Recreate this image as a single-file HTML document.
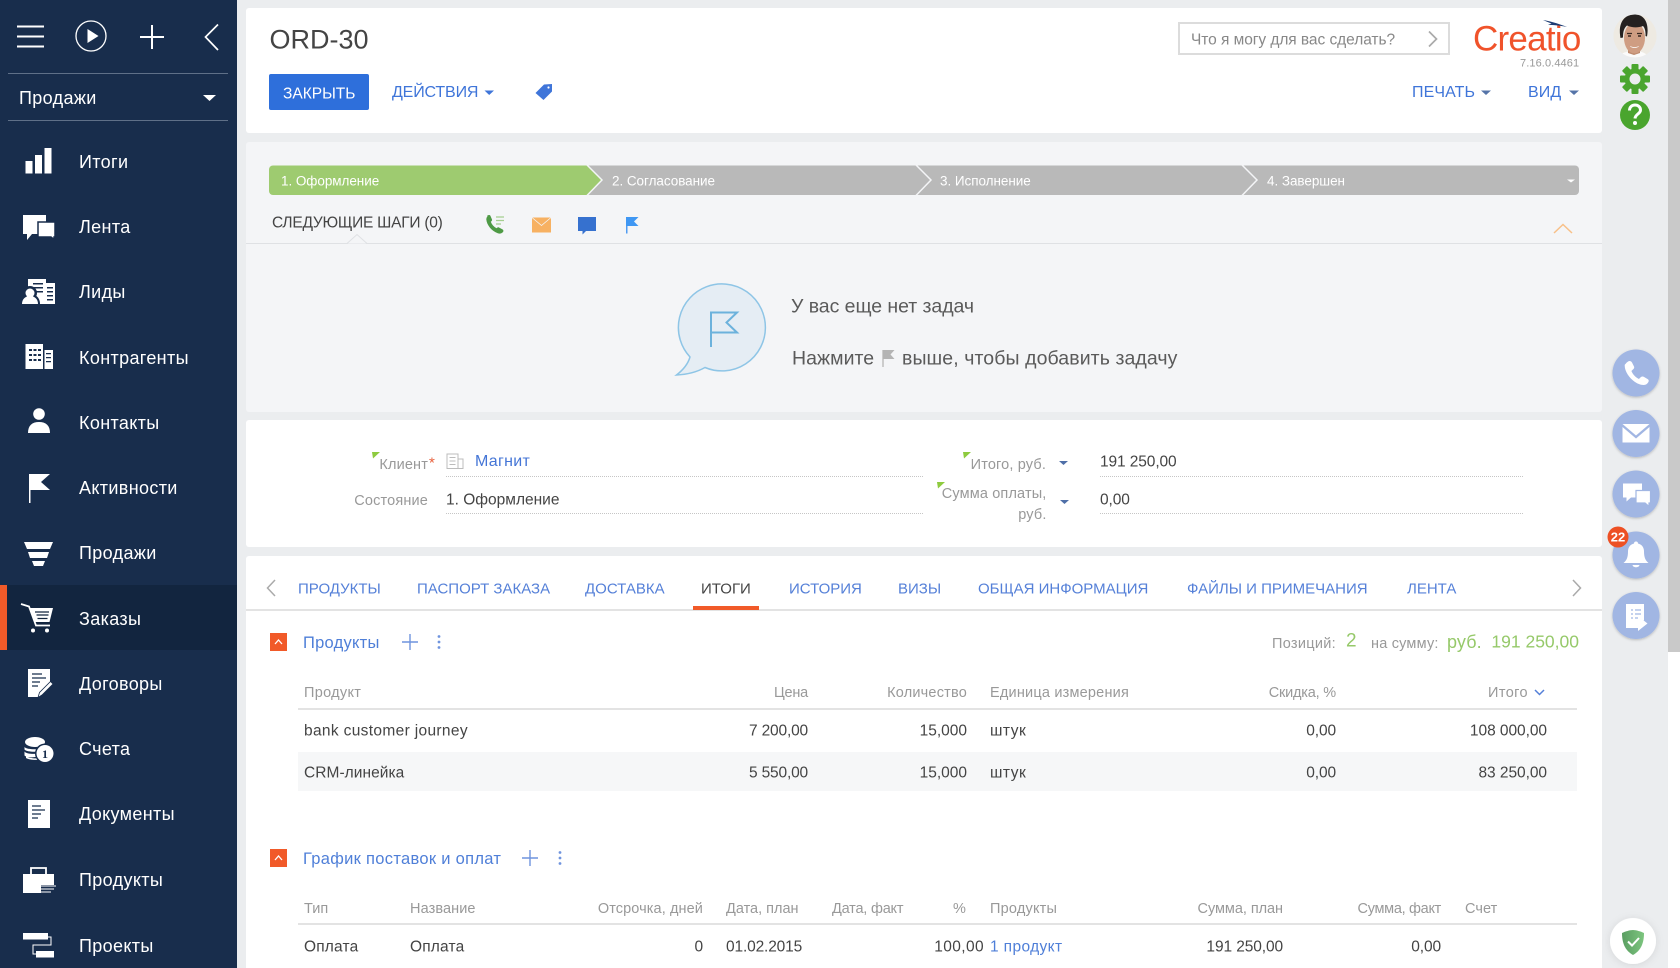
<!DOCTYPE html>
<html lang="ru">
<head>
<meta charset="utf-8">
<title>ORD-30</title>
<style>
html,body{margin:0;padding:0;width:1680px;height:968px;overflow:hidden;background:#ebedef;font-family:"Liberation Sans","DejaVu Sans",sans-serif}
.a{position:absolute}
.t{position:absolute;white-space:nowrap;line-height:1;transform:translateY(-50%);color:#444;font-size:15.5px;letter-spacing:.3px}
.r{transform:translate(-100%,-50%)}
.n{letter-spacing:-.1px}
.m{color:#fff;font-size:18px;left:79px;letter-spacing:.35px}
.l{color:#999;font-size:14.5px;letter-spacing:.15px}
.b{color:#4f7fd8}
.h{color:#999;font-size:14.5px;letter-spacing:.05px}
.tab{color:#5580d8;font-size:15px;top:589px;letter-spacing:0}
.act{font-size:16px;color:#3f75d9;letter-spacing:.1px;top:93px}
.st{top:181px;color:#fff;font-size:13.500px;letter-spacing:-.05px}
svg{position:absolute;left:0;top:0;overflow:visible}
</style>
</head>
<body>
<!-- sidebar -->
<div class="a" style="left:0;top:0;width:237px;height:968px;background:#182d4c"></div>
<div class="a" style="left:0;top:585px;width:237px;height:65px;background:#12253f"></div>
<div class="a" style="left:0;top:585px;width:7px;height:65px;background:#f15a29"></div>
<div class="a" style="left:8px;top:73px;width:220px;height:1px;background:#5f7088"></div>
<div class="a" style="left:8px;top:120px;width:220px;height:1px;background:#5f7088"></div>

<!-- cards -->
<div class="a" style="left:246px;top:8px;width:1356px;height:125px;background:#fff;border-radius:3px"></div>
<div class="a" style="left:246px;top:142px;width:1356px;height:270px;background:#f4f5f7;border-radius:3px"></div>
<div class="a" style="left:246px;top:420px;width:1356px;height:127px;background:#fff;border-radius:3px"></div>
<div class="a" style="left:246px;top:556px;width:1356px;height:412px;background:#fff;border-radius:3px 3px 0 0"></div>
<div class="a" style="left:246px;top:242.500px;width:1356px;height:1.500px;background:#dfe1e4"></div>
<div class="a" style="left:246px;top:609px;width:1356px;height:1.500px;background:#e3e3e3"></div>
<div class="a" style="left:1668px;top:0;width:12px;height:652px;background:#c9c9c9"></div>
<div class="a" style="left:1668px;top:652px;width:12px;height:316px;background:#fff"></div>

<div class="a" style="left:298px;top:752px;width:1279px;height:39px;background:#f6f7f8"></div>
<div class="a" style="left:298px;top:708px;width:1279px;height:1.500px;background:#e3e3e3"></div>
<div class="a" style="left:298px;top:923px;width:1279px;height:1.500px;background:#e3e3e3"></div>

<!-- sidebar text -->
<div class="t" style="left:19px;top:98px;color:#fff;font-size:18px;letter-spacing:.35px">Продажи</div>
<div class="t m" style="top:162px">Итоги</div>
<div class="t m" style="top:227px">Лента</div>
<div class="t m" style="top:292px">Лиды</div>
<div class="t m" style="top:358px">Контрагенты</div>
<div class="t m" style="top:423px">Контакты</div>
<div class="t m" style="top:488px">Активности</div>
<div class="t m" style="top:553px">Продажи</div>
<div class="t m" style="top:619px">Заказы</div>
<div class="t m" style="top:684px">Договоры</div>
<div class="t m" style="top:749px">Счета</div>
<div class="t m" style="top:814px">Документы</div>
<div class="t m" style="top:880px">Продукты</div>
<div class="t m" style="top:946px">Проекты</div>

<!-- header -->
<div class="t" style="left:269.500px;top:39.500px;font-size:27px;color:#444;letter-spacing:0">ORD-30</div>
<div class="a" style="left:269px;top:74px;width:100px;height:36px;background:#2e6fdb;border-radius:2px"></div>
<div class="t" style="left:283px;top:93.500px;color:#fff;font-size:15.500px;letter-spacing:0">ЗАКРЫТЬ</div>
<div class="t act" style="left:392px;letter-spacing:-.15px">ДЕЙСТВИЯ</div>
<div class="a" style="left:1178px;top:22px;width:268px;height:29px;border:2px solid #dcdcdc"></div>
<div class="t" style="left:1191px;top:40px;font-size:15.500px;color:#888;letter-spacing:-.05px">Что я могу для вас сделать?</div>
<div class="t" style="left:1473px;top:39px;font-size:35px;color:#f0532b;letter-spacing:-.75px">Creatio</div>
<div class="t" style="left:1520px;top:64px;font-size:11px;color:#999;letter-spacing:.1px">7.16.0.4461</div>
<div class="t act" style="left:1412px">ПЕЧАТЬ</div>
<div class="t act" style="left:1528px">ВИД</div>

<!-- stages -->
<svg width="1680" height="968" viewBox="0 0 1680 968" style="z-index:0">
<path d="M273 165.500H1575a4 4 0 0 1 4 4V191a4 4 0 0 1-4 4H273z" fill="#b9b9b9"/>
<path d="M273 165.500H587L602 180 587 195H273a4 4 0 0 1-4-4V169.500a4 4 0 0 1 4-4z" fill="#9ecb70"/>
<path d="M587 165L602 180 587 195.500" fill="none" stroke="#f4f5f7" stroke-width="1.500"/>
<path d="M916 165L931 180 916 195.500M1242 165L1257 180 1242 195.500" fill="none" stroke="#f4f5f7" stroke-width="1.500"/>
<path d="M1567 179.500h8l-4 3z" fill="#fff"/>
<path d="M347 243.500l10-9 10 9" fill="#f4f5f7" stroke="#dfe1e4" stroke-width="1"/>
<path d="M1554 233l9-8.500 9 8.500" fill="none" stroke="#f8c088" stroke-width="1.500"/>
</svg>
<div class="t st" style="left:281px">1. Оформление</div>
<div class="t st" style="left:612px">2. Согласование</div>
<div class="t st" style="left:940px">3. Исполнение</div>
<div class="t st" style="left:1267px">4. Завершен</div>
<div class="t" style="left:272px;top:222.500px;font-size:15.500px;color:#444;letter-spacing:-.25px">СЛЕДУЮЩИЕ ШАГИ (0)</div>

<div class="t" style="left:791px;top:307px;font-size:19.500px;color:#5a5a5a;letter-spacing:-.05px">У вас еще нет задач</div>
<div class="t" style="left:792px;top:359px;font-size:19.500px;color:#5a5a5a;letter-spacing:.05px">Нажмите</div>
<div class="t" style="left:902px;top:359px;font-size:19.500px;color:#5a5a5a;letter-spacing:.09px">выше, чтобы добавить задачу</div>

<!-- form -->
<div class="t l r" style="left:428px;top:464.500px">Клиент</div>
<div class="t" style="left:429px;top:463px;color:#e8603c;font-size:15px">*</div>
<div class="t b" style="left:475px;top:462px;font-size:16px;color:#4475d6;letter-spacing:.3px">Магнит</div>
<div class="t l r" style="left:428px;top:500.500px">Состояние</div>
<div class="t" style="left:446px;top:499.500px;font-size:15.500px;color:#444;letter-spacing:0">1. Оформление</div>
<div class="a" style="left:446px;top:476px;width:477px;border-top:1px dotted #c6c6c6"></div>
<div class="a" style="left:446px;top:513px;width:477px;border-top:1px dotted #c6c6c6"></div>
<div class="t l r" style="left:1046px;top:464.500px">Итого, руб.</div>
<div class="t l r" style="left:1046.500px;top:493.500px">Сумма оплаты,</div>
<div class="t l r" style="left:1046.500px;top:514.500px">руб.</div>
<div class="t n" style="left:1100px;top:461.500px">191 250,00</div>
<div class="t n" style="left:1100px;top:499.500px">0,00</div>
<div class="a" style="left:1100px;top:476px;width:423px;border-top:1px dotted #c6c6c6"></div>
<div class="a" style="left:1100px;top:513px;width:423px;border-top:1px dotted #c6c6c6"></div>

<!-- tabs -->
<div class="t tab" style="left:298px">ПРОДУКТЫ</div>
<div class="t tab" style="left:417px">ПАСПОРТ ЗАКАЗА</div>
<div class="t tab" style="left:585px">ДОСТАВКА</div>
<div class="t tab" style="left:701px;color:#444">ИТОГИ</div>
<div class="t tab" style="left:789px">ИСТОРИЯ</div>
<div class="t tab" style="left:898px">ВИЗЫ</div>
<div class="t tab" style="left:978px">ОБЩАЯ ИНФОРМАЦИЯ</div>
<div class="t tab" style="left:1187px">ФАЙЛЫ И ПРИМЕЧАНИЯ</div>
<div class="t tab" style="left:1407px">ЛЕНТА</div>
<div class="a" style="left:693px;top:606px;width:66px;height:4px;background:#f15a29"></div>

<!-- section 1 -->
<div class="t b" style="left:303px;top:643px;font-size:16.500px;color:#4f7fd8;letter-spacing:.25px">Продукты</div>
<div class="t l" style="left:1272px;top:644px;font-size:14.500px;letter-spacing:.3px">Позиций:</div>
<div class="t" style="left:1346px;top:641px;font-size:19px;color:#96c96a">2</div>
<div class="t l" style="left:1371px;top:644px;font-size:14.500px;letter-spacing:.2px">на сумму:</div>
<div class="t" style="left:1447px;top:641.500px;font-size:18px;color:#96c96a;letter-spacing:.1px">руб.</div>
<div class="t r" style="left:1579px;top:641.500px;font-size:17.500px;color:#96c96a;letter-spacing:0">191 250,00</div>

<div class="t h" style="left:304px;top:692.500px;letter-spacing:.3px">Продукт</div>
<div class="t h r" style="left:808px;top:692.500px;letter-spacing:-.2px">Цена</div>
<div class="t h r" style="left:967px;top:692.500px;letter-spacing:.2px">Количество</div>
<div class="t h" style="left:990px;top:692.500px;letter-spacing:.2px">Единица измерения</div>
<div class="t h r" style="left:1336px;top:692.500px;letter-spacing:-.2px">Скидка, %</div>
<div class="t h r" style="left:1528px;top:692.500px;letter-spacing:.4px">Итого</div>

<div class="t" style="left:304px;top:731px;letter-spacing:.34px">bank customer journey</div>
<div class="t r" style="left:808px;top:731px;letter-spacing:-.17px">7 200,00</div>
<div class="t r" style="left:967px;top:731px;letter-spacing:0">15,000</div>
<div class="t" style="left:990px;top:731px;letter-spacing:.5px">штук</div>
<div class="t r n" style="left:1336px;top:731px">0,00</div>
<div class="t r" style="left:1547px;top:731px;letter-spacing:-.05px">108 000,00</div>

<div class="t" style="left:304px;top:773px;letter-spacing:.05px">CRM-линейка</div>
<div class="t r" style="left:808px;top:773px;letter-spacing:-.17px">5 550,00</div>
<div class="t r" style="left:967px;top:773px;letter-spacing:0">15,000</div>
<div class="t" style="left:990px;top:773px;letter-spacing:.5px">штук</div>
<div class="t r n" style="left:1336px;top:773px">0,00</div>
<div class="t r" style="left:1547px;top:773px;letter-spacing:-.05px">83 250,00</div>

<!-- section 2 -->
<div class="t b" style="left:303px;top:859px;font-size:16.500px;color:#4f7fd8;letter-spacing:.3px">График поставок и оплат</div>
<div class="t h" style="left:304px;top:908.500px">Тип</div>
<div class="t h" style="left:410px;top:908.500px;letter-spacing:.1px">Название</div>
<div class="t h r" style="left:703px;top:908.500px;letter-spacing:.1px">Отсрочка, дней</div>
<div class="t h" style="left:726px;top:908.500px;letter-spacing:0">Дата, план</div>
<div class="t h" style="left:832px;top:908.500px;letter-spacing:-.2px">Дата, факт</div>
<div class="t h r" style="left:966px;top:908.500px">%</div>
<div class="t h" style="left:990px;top:908.500px;letter-spacing:.2px">Продукты</div>
<div class="t h r" style="left:1283px;top:908.500px;letter-spacing:-.05px">Сумма, план</div>
<div class="t h r" style="left:1441px;top:908.500px;letter-spacing:-.3px">Сумма, факт</div>
<div class="t h" style="left:1465px;top:908.500px">Счет</div>

<div class="t" style="left:304px;top:947px;letter-spacing:.18px">Оплата</div>
<div class="t" style="left:410px;top:947px;letter-spacing:.18px">Оплата</div>
<div class="t r n" style="left:703px;top:947px">0</div>
<div class="t" style="left:726px;top:947px;letter-spacing:-.15px">01.02.2015</div>
<div class="t r" style="left:984px;top:947px;letter-spacing:.4px">100,00</div>
<div class="t b" style="left:990px;top:947px;letter-spacing:.38px">1 продукт</div>
<div class="t r n" style="left:1283px;top:947px">191 250,00</div>
<div class="t r n" style="left:1441px;top:947px">0,00</div>

<!-- all icons -->
<svg width="1680" height="968" viewBox="0 0 1680 968">
<defs>
<filter id="s" x="-20%" y="-20%" width="140%" height="140%"><feDropShadow dx="0" dy="1" stdDeviation="1.200" flood-color="#000" flood-opacity=".22"/></filter>
<filter id="s2" x="-40%" y="-40%" width="180%" height="180%"><feDropShadow dx="0" dy="1" stdDeviation="4" flood-color="#000" flood-opacity=".1"/></filter>
<clipPath id="av"><circle cx="1635" cy="36" r="21.500"/></clipPath>
<linearGradient id="sh" x1="0" x2="1"><stop offset="0" stop-color="#5a9e62"/><stop offset="1" stop-color="#7cc47e"/></linearGradient>
</defs>
<!-- top bar -->
<g stroke="#fff" fill="none" stroke-width="2">
<path d="M17 26.500h27M17 36.500h27M17 46.500h27"/>
<circle cx="91" cy="36" r="15" stroke-width="1.300"/>
<path d="M140 37h24M152 25v24" stroke-width="2"/>
<path d="M218 24.500L205.500 37 218 50" stroke-width="1.700"/>
</g>
<path d="M87.500 29v14l11-7z" fill="#fff"/>
<path d="M203 95h13l-6.500 6z" fill="#fff"/>

<g fill="#fff">
<!-- Итоги -->
<rect x="25.500" y="161" width="7" height="12.500"/><rect x="35" y="155" width="7" height="18.500"/><rect x="44.500" y="148" width="7" height="25.500"/>
<!-- Лента -->
<path d="M23 215h23v19H32l-5 6v-6h-4z"/>
<path d="M38 222h17v15h-1v2.500l-3-2.500H38z" stroke="#182d4c" stroke-width="1.500"/>
<!-- Лиды -->
<path d="M28 279h18v4h9v21H28z"/>
<g fill="#182d4c"><path d="M33 283h10v1.500H33zM33 287h10v1.500H33zM33 291h10v1.500H33zM47 287h6v1.500h-6zM47 291h6v1.500h-6zM47 295h6v1.500h-6zM47 299h6v1.500h-6z"/><circle cx="30" cy="293" r="7"/><path d="M20 304c0-7 5-10 10-10s10 3 10 10z"/></g>
<circle cx="30" cy="293" r="4.500"/><path d="M22 304c0-5 3.500-8 8-8s8 3 8 8z"/>
<!-- Контрагенты -->
<path d="M25.500 344H43v25H25.500z"/><path d="M44.500 350H53v19h-8.500z"/>
<g fill="#182d4c"><path d="M29 349h3v2h-3zM33.500 349h3v2h-3zM38 349h3v2h-3zM29 354h3v2h-3zM33.500 354h3v2h-3zM38 354h3v2h-3zM29 359h3v2h-3zM33.500 359h3v2h-3zM38 359h3v2h-3zM46 353h5v1.200h-5zM46 357h5v1.200h-5zM46 361h5v1.200h-5z"/></g>
<!-- Контакты -->
<circle cx="39" cy="414" r="5.800"/><path d="M28 433c0-7.500 4-11 11-11s11 3.500 11 11z"/>
<!-- Активности -->
<path d="M29 474h1.500v29H29z"/><path d="M30 474h20l-9 8 9 8H30z"/>
<!-- Продажи -->
<path d="M24 542h29l-3 7H27zM28 552h21l-2 6H30zM32 561h13l-2 5h-9z"/>
<!-- Заказы -->
<path d="M21 604l8 2.500 7 19h14" fill="none" stroke="#fff" stroke-width="1.800"/>
<path d="M30 608h23l-3.500 14H34.500z"/>
<path d="M35 612h14M36.500 615h12M37.500 618.500h10" stroke="#12253f" stroke-width="1.200"/>
<circle cx="33" cy="630.500" r="2"/><circle cx="47" cy="630.500" r="2"/>
<!-- Договоры -->
<path d="M28 669h22v13l-10 10-1 5H28z"/>
<path d="M32 674h10M32 678h14M32 682h8M32 686h6" stroke="#182d4c" stroke-width="1.300"/>
<path d="M38 697.500l1.500-5 11-11 2.500 2.500-11 11z" stroke="#182d4c" stroke-width=".8"/>
<!-- Счета -->
<ellipse cx="35" cy="742" rx="10" ry="5"/>
<path d="M24.500 747c2 3 18 3 20 0v2.500c-2 3-18 3-20 0zM24.500 751.500c2 3 14 3 15 1v2.500c-2 3-13 3-15 .5zM26 756c2 2 10 3 13 2v1.500c-3 1-11 0-13-1.500z"/>
<circle cx="45" cy="753.500" r="10" fill="#182d4c"/><circle cx="45" cy="753.500" r="8.500"/>
<text x="45" y="758" text-anchor="middle" font-family="'Liberation Serif',serif" font-size="12" font-weight="bold" fill="#182d4c">1</text>
<!-- Документы -->
<path d="M28 800h22v28H28z"/>
<path d="M32 806h9M32 810h13M32 814h9M32 818h6" stroke="#182d4c" stroke-width="1.300"/>
<!-- Продукты -->
<path d="M23 874h31v11H41v8H23z"/>
<path d="M31 874v-6h15v6" fill="none" stroke="#fff" stroke-width="1.800"/>
<path d="M41 886h15M41 889h13M41 892h10" stroke="#fff" stroke-width="1"/>
<!-- Проекты -->
<rect x="23" y="933" width="25" height="6.500"/><rect x="36" y="951" width="18" height="6.500"/>
<path d="M48 937h3v8H33v9h3" fill="none" stroke="#fff" stroke-width="1"/>
</g>

<!-- header icons -->
<path d="M484.500 90.500h9.500l-4.800 4.500z" fill="#3f75d9"/>
<path d="M535.500 93l8.500-8.500 8-.5v7.500l-8.500 8.500z" fill="#3f75d9"/>
<circle cx="548.500" cy="87.500" r="1.100" fill="#fff"/>
<path d="M1481 90.500h10l-5 4.500z" fill="#5574a8"/>
<path d="M1569 90.500h10l-5 4.500z" fill="#5574a8"/>
<path d="M1429 31.500l7.500 7.500-7.500 7.500" fill="none" stroke="#aaa" stroke-width="1.700"/>
<!-- logo swoosh -->
<path d="M1543 20c9 1.500 18 4.500 24 7-8-1.500-14-2-19-2.200l3.500-1.300c-3-1.200-6-2.300-8.500-3.500z" fill="#1d3c73"/>
<!-- avatar -->
<circle cx="1635" cy="36" r="21.500" fill="#eee7df"/>
<g clip-path="url(#av)">
<rect x="1613" y="14" width="44" height="44" fill="#eeeae2"/>
<path d="M1618 58c2-5 9-7 16-7s13 2 15 7z" fill="#fbfbfb"/>
<path d="M1628 46h12v7l-6 2-6-2z" fill="#bd8a6e"/>
<ellipse cx="1634.500" cy="38" rx="10.500" ry="15.500" fill="#cf9d82"/>
<path d="M1620.500 38c-2.500-13 2-23 13.500-23.500 10-.5 15.500 8 13 22l-1.500-.5c.3-4-.5-8-2.500-10-5 2-11 1.800-16-.5-3 2.500-4 6-4 12z" fill="#252120"/>
<path d="M1627 33.500h5M1637 33.500h5" stroke="#3a2a22" stroke-width="1.200"/>
<path d="M1628 36h3M1638 36h3" stroke="#3a2a22" stroke-width="1.400"/>
<path d="M1630 46c3 1.500 6 1.500 9 0-1 2.500-8 2.500-9 0z" fill="#fff"/>
</g>
<!-- gear -->
<g fill="#4aa52e">
<circle cx="1635" cy="79" r="10.500"/>
<rect x="1631.500" y="64" width="7" height="30" rx="1"/><rect x="1631.500" y="64" width="7" height="30" rx="1" transform="rotate(45 1635 79)"/><rect x="1631.500" y="64" width="7" height="30" rx="1" transform="rotate(90 1635 79)"/><rect x="1631.500" y="64" width="7" height="30" rx="1" transform="rotate(135 1635 79)"/>
</g>
<circle cx="1635" cy="79" r="5.500" fill="#ebedef"/>
<!-- help -->
<circle cx="1635" cy="115" r="15" fill="#4aa52e"/>
<path d="M1629.500 110.500c0-3.500 2.500-5.500 5.500-5.500s5.500 2 5.500 5c0 4-5.200 4-5.500 8.500" fill="none" stroke="#fff" stroke-width="3"/>
<circle cx="1635" cy="123" r="2" fill="#fff"/>

<!-- round buttons -->
<g fill="#a1b6e3" filter="url(#s)">
<circle cx="1636" cy="373" r="23.500"/><circle cx="1636" cy="433.500" r="23.500"/><circle cx="1636" cy="494" r="23.500"/><circle cx="1636" cy="555" r="23.500"/><circle cx="1636" cy="615.500" r="23.500"/>
</g>
<g fill="#fff">
<path d="M1625.500 364c1-1.500 3-3 4-3s2 .5 2.500 1.500l2 4c.5 1 0 2-.8 2.800l-1.800 1.700c1.500 3.500 4 6.200 7.500 8l1.800-1.800c.8-.7 2-1 3-.4l4 2.300c1.200.6 1.200 2 .7 2.900-.8 1.500-2.500 3-4.700 3-9 0-19-11-19-19.500 0-.7.300-1.300.8-1.500z"/>
<path d="M1622.500 424h27l-13.500 11.500z"/><path d="M1622.500 427l13.500 11.500 13.500-11.500v15.500h-27z"/>
<path d="M1623 483.500h19v14h-11l-4.500 4v-4h-3.500z"/>
<path d="M1636 490.500h14.500v12.500h-1.500v3.500l-4-3.500h-9z" stroke="#a1b6e3" stroke-width="1.200"/>
<path d="M1636 541.500c1.500 0 2 1 2 2 4 1 6 4 6 8 0 6 1.500 9 4.500 11.500h-25c3-2.500 4.500-5.500 4.500-11.500 0-4 2-7 6-8 0-1 .5-2 2-2z"/>
<path d="M1632.500 565h7c-.5 3-6.500 3-7 0z"/>
<path d="M1626 604h18v16l-6 5v3h-12z"/>
<path d="M1638 616l9.500 7.500-9.500 7.500z"/>
</g>
<path d="M1631 610h2M1635 610h6M1631 614h2M1635 614h6M1631 618h2M1635 618h3" stroke="#a1b6e3" stroke-width="1.300"/>
<circle cx="1618" cy="537" r="10.500" fill="#ed5024"/>

<!-- shield -->
<circle cx="1633" cy="941" r="23" fill="#fff" filter="url(#s2)"/>
<path d="M1633 930c3 0 8 1.500 11 3 0 10-3 17.500-11 22-8-4.500-11-12-11-22 3-1.500 8-3 11-3z" fill="url(#sh)"/>
<path d="M1628 941.500l4 4 7-7.500" fill="none" stroke="#fff" stroke-width="2"/>

<!-- next step icons -->
<path d="M487 216c1-1.200 3-1.500 3.500 0l1.500 3.500c.3.800-.2 1.500-1.200 2.300 1 2.800 3 5 5.700 6.400 1-.7 1.800-1.200 2.500-.7l3.700 2c1 .6.900 2 .1 2.800-1.200 1.200-3 1.800-5 1-6-2.300-11-8-11.500-13.800 0-1.400.6-2.700 1.400-3.500z" fill="#4e9a45"/>
<path d="M496 217h8M496 220.500h8M496 224h5" stroke="#a5cf8f" stroke-width="1.300"/>
<path d="M532 218l9.500 8 9.500-8v14.500h-19z" fill="#f7b162"/><path d="M532.500 217.500h18l-9 7.500z" fill="#f7b162"/>
<path d="M578 217h18v14h-10l-3.500 3.500v-3.500h-4.500z" fill="#3671cf"/>
<path d="M626 217h1.500v16.500H626z" fill="#4f9cf2"/><path d="M626 217h12.500l-4.500 4.500 4.500 4.500H626z" fill="#3f97f3"/>

<!-- empty state -->
<path d="M690 357A43.500 43.500 0 1 1 705 367.500C697 372 687 374.500 676.500 375 683 370 688 364 690 357Z" fill="#e5edf4" stroke="#8ec5e6" stroke-width="1.500"/>
<path d="M711 347V312.500H737L726.500 322.500 737 332.500H711" fill="none" stroke="#6cb2dc" stroke-width="2"/>
<path d="M882 350h2v17h-2z" fill="#ccc"/><path d="M883 350h11.500l-4 4.500 4 4.500h-11.500z" fill="#b4b4b4"/>

<!-- form icons -->
<path d="M372 452h8l-7 6.500z" fill="#8ecb3f"/>
<path d="M963 452h8l-7 6.500z" fill="#8ecb3f"/>
<path d="M937 482h8l-7 6.500z" fill="#8ecb3f"/>
<g fill="none" stroke="#bcbcbc" stroke-width="1"><rect x="447" y="454" width="11" height="14.500"/><path d="M458 459h5v9.500h-5M449.500 457.500h6M449.500 461h6M449.500 464.500h6"/></g>
<path d="M1059 461h9l-4.500 4z" fill="#4f6fa8"/>
<path d="M1060 500h9l-4.500 4z" fill="#4f6fa8"/>

<!-- tab chevrons -->
<path d="M275 580l-7.500 8 7.500 8" fill="none" stroke="#aaa" stroke-width="1.500"/>
<path d="M1573 580l7.500 8-7.500 8" fill="none" stroke="#aaa" stroke-width="1.500"/>

<!-- toggles -->
<rect x="270" y="633" width="17" height="18" fill="#f15a29"/>
<path d="M275 644l3.500-4 3.500 4" fill="none" stroke="#fff" stroke-width="1.300"/>
<rect x="270" y="849" width="17" height="18" fill="#f15a29"/>
<path d="M275 860l3.500-4 3.500 4" fill="none" stroke="#fff" stroke-width="1.300"/>
<path d="M402 642h16M410 634v16M522 858h16M530 850v16" stroke="#6f94de" stroke-width="1.400"/>
<g fill="#6f94de"><circle cx="439" cy="636.500" r="1.400"/><circle cx="439" cy="642" r="1.400"/><circle cx="439" cy="647.500" r="1.400"/><circle cx="560" cy="852.500" r="1.400"/><circle cx="560" cy="858" r="1.400"/><circle cx="560" cy="863.500" r="1.400"/></g>
<path d="M1535 690l4.500 4.500 4.500-4.500" fill="none" stroke="#5580d8" stroke-width="1.500"/>
</svg>
<div class="t" style="left:1618px;top:537px;color:#fff;font-size:13px;transform:translate(-50%,-50%);letter-spacing:0;font-weight:bold">22</div>
</body>
</html>
